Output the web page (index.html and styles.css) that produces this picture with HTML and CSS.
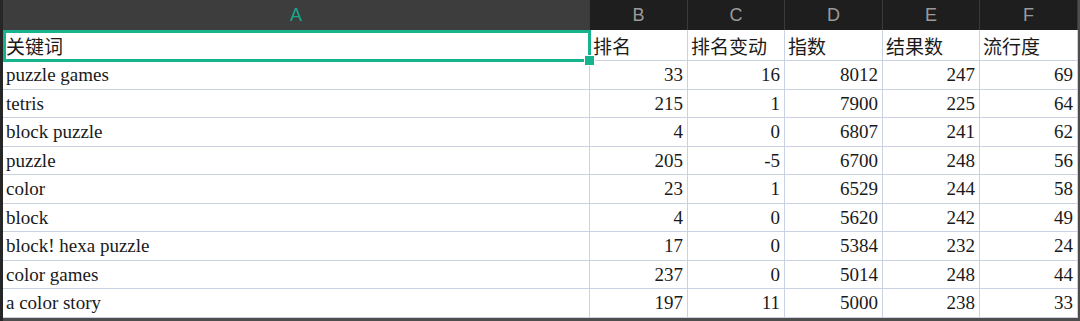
FILE: index.html
```html
<!DOCTYPE html>
<html lang="zh">
<head>
<meta charset="utf-8">
<title>关键词</title>
<link rel="stylesheet" href="styles.css">
</head>
<body>
<div class="sheet">
  <div class="colhead active">A</div>
  <div class="colhead">B</div>
  <div class="colhead">C</div>
  <div class="colhead">D</div>
  <div class="colhead">E</div>
  <div class="colhead">F</div>

  <div class="cell first zh selected">关键词<span class="handle"></span></div>
  <div class="cell first zh">排名</div>
  <div class="cell first zh">排名变动</div>
  <div class="cell first zh">指数</div>
  <div class="cell first zh">结果数</div>
  <div class="cell first zh">流行度</div>

  <div class="cell">puzzle games</div><div class="cell num">33</div><div class="cell num">16</div><div class="cell num">8012</div><div class="cell num">247</div><div class="cell num">69</div>
  <div class="cell">tetris</div><div class="cell num">215</div><div class="cell num">1</div><div class="cell num">7900</div><div class="cell num">225</div><div class="cell num">64</div>
  <div class="cell">block puzzle</div><div class="cell num">4</div><div class="cell num">0</div><div class="cell num">6807</div><div class="cell num">241</div><div class="cell num">62</div>
  <div class="cell">puzzle</div><div class="cell num">205</div><div class="cell num">-5</div><div class="cell num">6700</div><div class="cell num">248</div><div class="cell num">56</div>
  <div class="cell">color</div><div class="cell num">23</div><div class="cell num">1</div><div class="cell num">6529</div><div class="cell num">244</div><div class="cell num">58</div>
  <div class="cell">block</div><div class="cell num">4</div><div class="cell num">0</div><div class="cell num">5620</div><div class="cell num">242</div><div class="cell num">49</div>
  <div class="cell">block! hexa puzzle</div><div class="cell num">17</div><div class="cell num">0</div><div class="cell num">5384</div><div class="cell num">232</div><div class="cell num">24</div>
  <div class="cell">color games</div><div class="cell num">237</div><div class="cell num">0</div><div class="cell num">5014</div><div class="cell num">248</div><div class="cell num">44</div>
  <div class="cell">a color story</div><div class="cell num">197</div><div class="cell num">11</div><div class="cell num">5000</div><div class="cell num">238</div><div class="cell num">33</div>
</div>
</body>
</html>
```
FILE: styles.css
```css
html, body {
  margin: 0;
  padding: 0;
}
body {
  width: 1080px;
  height: 321px;
  overflow: hidden;
  background: #4d4d4d;
  border-left: 3px solid #262626;
  box-sizing: border-box;
}
.sheet {
  display: grid;
  grid-template-columns: 587px 98px 97px 98px 97px 98px;
  grid-template-rows: 30px 31px repeat(9, 28.5px);
  background: #ffffff;
  width: 1075px;
}
.colhead {
  background: #1e1e1e;
  color: #9b9b9b;
  font-family: "Liberation Sans", Arial, sans-serif;
  font-size: 18px;
  display: flex;
  align-items: center;
  justify-content: center;
  border-right: 1px solid #3a3a3a;
  box-sizing: border-box;
}
.colhead.active {
  background: #3d3d3d;
  color: #17a88b;
}
.cell {
  font-family: "Liberation Serif", "Noto Sans CJK SC", serif;
  font-size: 19px;
  color: #1a1a1a;
  border-right: 1px solid #c9d1e2;
  border-bottom: 1px solid #c9d1e2;
  box-sizing: border-box;
  display: flex;
  align-items: center;
  padding: 1px 4px 0 3px;
  white-space: nowrap;
  overflow: hidden;
}
.cell.num {
  justify-content: flex-end;
  padding-right: 4px;
}
.cell.zh {
  font-family: "Noto Sans CJK SC", sans-serif;
  font-weight: 400;
  font-size: 19px;
  padding-left: 3px;
}
.cell.selected {
  position: relative;
  overflow: visible;
}
.cell.selected::after {
  content: "";
  position: absolute;
  top: 0;
  left: 0;
  right: -2px;
  bottom: -2px;
  border: 3px solid #16b48c;
  pointer-events: none;
}
.handle {
  position: absolute;
  right: -6px;
  bottom: -6px;
  width: 9px;
  height: 9px;
  background: #16b48c;
  border: 1px solid #ffffff;
  z-index: 2;
}
```
